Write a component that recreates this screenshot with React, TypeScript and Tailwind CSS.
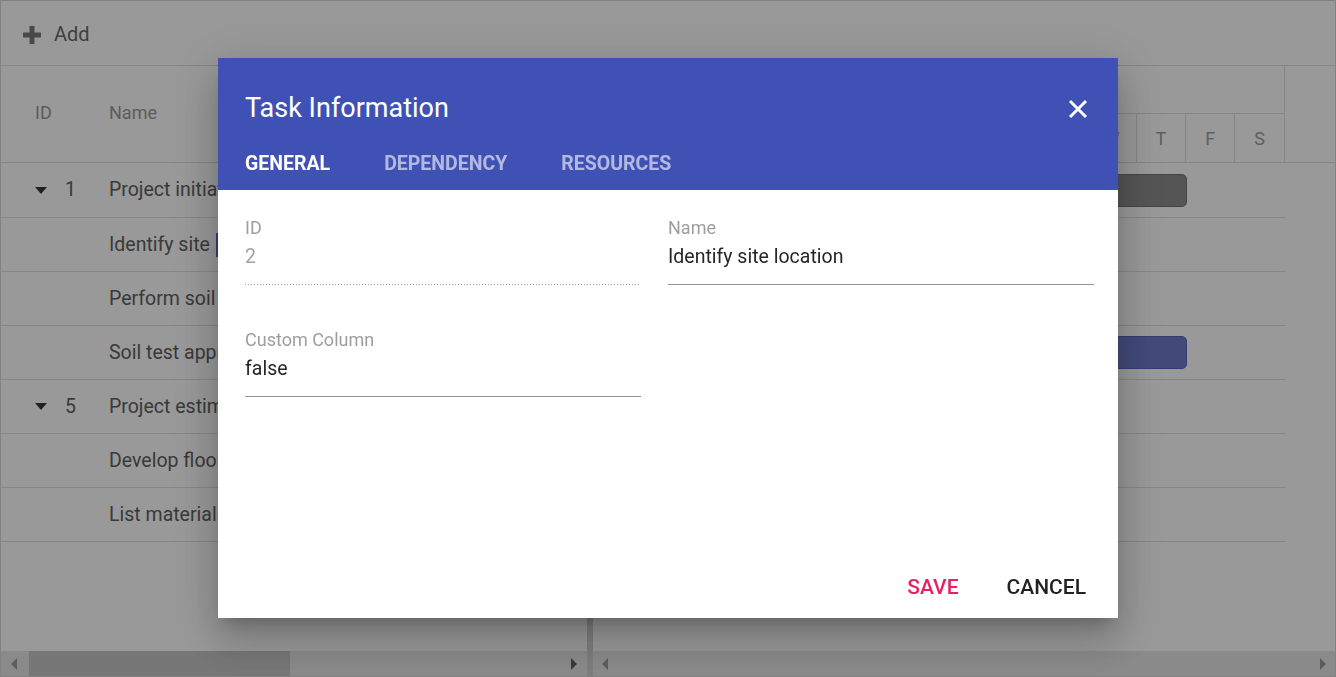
import React from "react";

const rows = [
  { id: "1", name: "Project initiation", parent: true },
  { id: "2", name: "Identify site", parent: false, focus: true },
  { id: "3", name: "Perform soil test", parent: false },
  { id: "4", name: "Soil test approval", parent: false },
  { id: "5", name: "Project estimation", parent: true },
  { id: "6", name: "Develop floor plan for estimation", parent: false },
  { id: "7", name: "List materials", parent: false },
];

const days = ["S", "M", "T", "W", "T", "F", "S", "S", "M", "T", "W", "T", "F", "S"];

const Caret = () => (
  <span className="inline-block w-0 h-0 border-l-[6px] border-r-[6px] border-t-[7px] border-l-transparent border-r-transparent border-t-[#3a3a3a]" />
);

const ScrollArrow = ({ dir, dim }: { dir: "left" | "right"; dim?: boolean }) => (
  <span
    className={
      dir === "left"
        ? `inline-block w-0 h-0 border-t-[6px] border-b-[6px] border-r-[6px] border-t-transparent border-b-transparent ${dim ? "border-r-[#9a9a9a]" : "border-r-[#616161]"}`
        : `inline-block w-0 h-0 border-t-[6px] border-b-[6px] border-l-[6px] border-t-transparent border-b-transparent ${dim ? "border-l-[#9a9a9a]" : "border-l-[#616161]"}`
    }
  />
);

const Field = ({
  label,
  value,
  disabled,
  width,
}: {
  label: string;
  value: string;
  disabled?: boolean;
  width: string;
}) => (
  <div className={`flex flex-col ${width}`}>
    <div className="h-[22px] leading-[22px] text-[18px] text-[#9e9e9e]">{label}</div>
    <div
      className={`mt-[4px] h-[28px] leading-[28px] text-[19.5px] ${disabled ? "text-[#a3a3a3]" : "text-[#262626]"}`}
    >
      {value}
    </div>
    {disabled ? (
      <div className="mt-[13px] h-px bg-[linear-gradient(to_right,#9e9e9e_34%,transparent_0%)] bg-[length:3px_1px] bg-repeat-x" />
    ) : (
      <div className="mt-[13px] h-px bg-[#949494]" />
    )}
  </div>
);

const App: React.FC = () => {
  return (
    <div className="relative w-[1336px] h-[677px] overflow-hidden bg-white font-['Roboto',sans-serif]">
      <div className="flex flex-col w-full h-full border border-[#d9d9d9]">
        {/* Toolbar */}
        <div className="flex items-center h-[65px] shrink-0 border-b border-[#e0e0e0] pl-[21px] pt-[2px]">
          <svg width="20" height="20" viewBox="0 0 20 20" className="mt-[1px]">
            <path d="M10 1 V19 M1 10 H19" stroke="#7a7a7a" strokeWidth="5" />
          </svg>
          <span className="ml-[12px] text-[20px] text-[#6b6b6b]">Add</span>
        </div>

        <div className="flex flex-1 min-h-0">
          {/* Grid pane */}
          <div className="flex flex-col w-[586px] shrink-0">
            <div className="flex items-center h-[97px] shrink-0 border-b border-[#e0e0e0] pb-[4px] text-[18px] text-[#9a9a9a]">
              <div className="w-[108px] pl-[34px]">ID</div>
              <div>Name</div>
            </div>
            {rows.map((r, i) => (
              <div
                key={r.id}
                className={`flex items-center ${i === 0 ? "h-[55px]" : "h-[54px]"} shrink-0 border-b border-[#e0e0e0] text-[19.5px] text-[#616161]`}
              >
                <div className="flex items-center w-[108px] pl-[34px]">
                  {r.parent && (
                    <>
                      <Caret />
                      <span className="ml-[18px]">{r.id}</span>
                    </>
                  )}
                </div>
                <div className="flex items-center whitespace-nowrap">
                  {r.name}
                  {r.focus && (
                    <span className="ml-[6px] w-[12px] h-[24px] border-2 border-[#5c6bc0] bg-[#e8eaf6]" />
                  )}
                </div>
              </div>
            ))}
            <div className="flex-1" />
            <div className="flex items-center h-[25px] shrink-0 bg-[#e6e6e6] px-[10px]">
              <ScrollArrow dir="left" dim />
              <div className="ml-[12px] w-[261px] h-full bg-[#c6c6c6]" />
              <div className="flex-1" />
              <ScrollArrow dir="right" />
            </div>
          </div>

          {/* Splitter */}
          <div className="w-[6px] shrink-0 bg-[#d2d2d2]" />

          {/* Chart pane */}
          <div className="flex flex-col flex-1 min-w-0">
            <div className="flex flex-col h-[97px] shrink-0 border-b border-[#e0e0e0]">
              <div className="flex h-[48px] shrink-0">
                <div className="w-[346px] border-r border-b border-[#e0e0e0]" />
                <div className="w-[346px] border-r border-b border-[#e0e0e0]" />
              </div>
              <div className="flex flex-1">
                {days.map((d, i) => (
                  <div
                    key={i}
                    className="flex items-center justify-center w-[49.43px] shrink-0 border-r border-[#e0e0e0] text-[18px] text-[#9e9e9e]"
                  >
                    {d}
                  </div>
                ))}
              </div>
            </div>
            {rows.map((r, i) => (
              <div
                key={r.id}
                className={`flex items-center ${i === 0 ? "h-[55px]" : "h-[54px]"} w-[692px] shrink-0 border-b border-[#e0e0e0]`}
              >
                {i === 0 && (
                  <div className="ml-[50px] w-[544px] h-[33px] rounded-[5px] bg-[#8e8e8e] border border-[#747474]" />
                )}
                {i === 3 && (
                  <div className="ml-[220px] w-[374px] h-[33px] rounded-[5px] bg-[#717ccc] border border-[#5866c0]" />
                )}
              </div>
            ))}
            <div className="flex-1" />
            <div className="flex items-center justify-between h-[25px] shrink-0 bg-[#e6e6e6] px-[9px]">
              <ScrollArrow dir="left" dim />
              <ScrollArrow dir="right" dim />
            </div>
          </div>
        </div>
      </div>

      {/* Modal */}
      <div className="fixed inset-0 flex items-center justify-center bg-black/40">
        <div className="flex flex-col w-[900px] h-[560px] mb-px bg-white shadow-[0_11px_15px_-7px_rgba(0,0,0,0.2),0_24px_38px_3px_rgba(0,0,0,0.14),0_9px_46px_8px_rgba(0,0,0,0.12)]">
          <div className="flex flex-col h-[132px] shrink-0 bg-[#3f51b5] pl-[27px] pr-[30px]">
            <div className="flex items-center justify-between pt-[35px] h-[65px]">
              <span className="text-[27px] leading-[30px] text-white">Task Information</span>
              <svg width="20" height="20" viewBox="0 0 20 20" className="mt-[2px]">
                <path d="M2 2 L18 18 M18 2 L2 18" stroke="#fff" strokeWidth="3" />
              </svg>
            </div>
            <div className="flex items-center gap-[54px] mt-[15px] h-[52px] text-[19.5px] font-bold">
              <span className="text-white">GENERAL</span>
              <span className="text-white/60">DEPENDENCY</span>
              <span className="text-white/60">RESOURCES</span>
            </div>
          </div>

          <div className="flex flex-col flex-1 pl-[27px] pt-[27px]">
            <div className="flex gap-[27px]">
              <Field label="ID" value="2" disabled width="w-[396px]" />
              <Field label="Name" value="Identify site location" width="w-[426px]" />
            </div>
            <div className="flex mt-[44px]">
              <Field label="Custom Column" value="false" width="w-[396px]" />
            </div>
          </div>

          <div className="flex items-center justify-end gap-[48px] h-[64px] shrink-0 pt-[4px] pr-[32px] text-[21px] font-medium">
            <span className="text-[#e91e63]">SAVE</span>
            <span className="text-[#212121]">CANCEL</span>
          </div>
        </div>
      </div>
    </div>
  );
};

export default App;
